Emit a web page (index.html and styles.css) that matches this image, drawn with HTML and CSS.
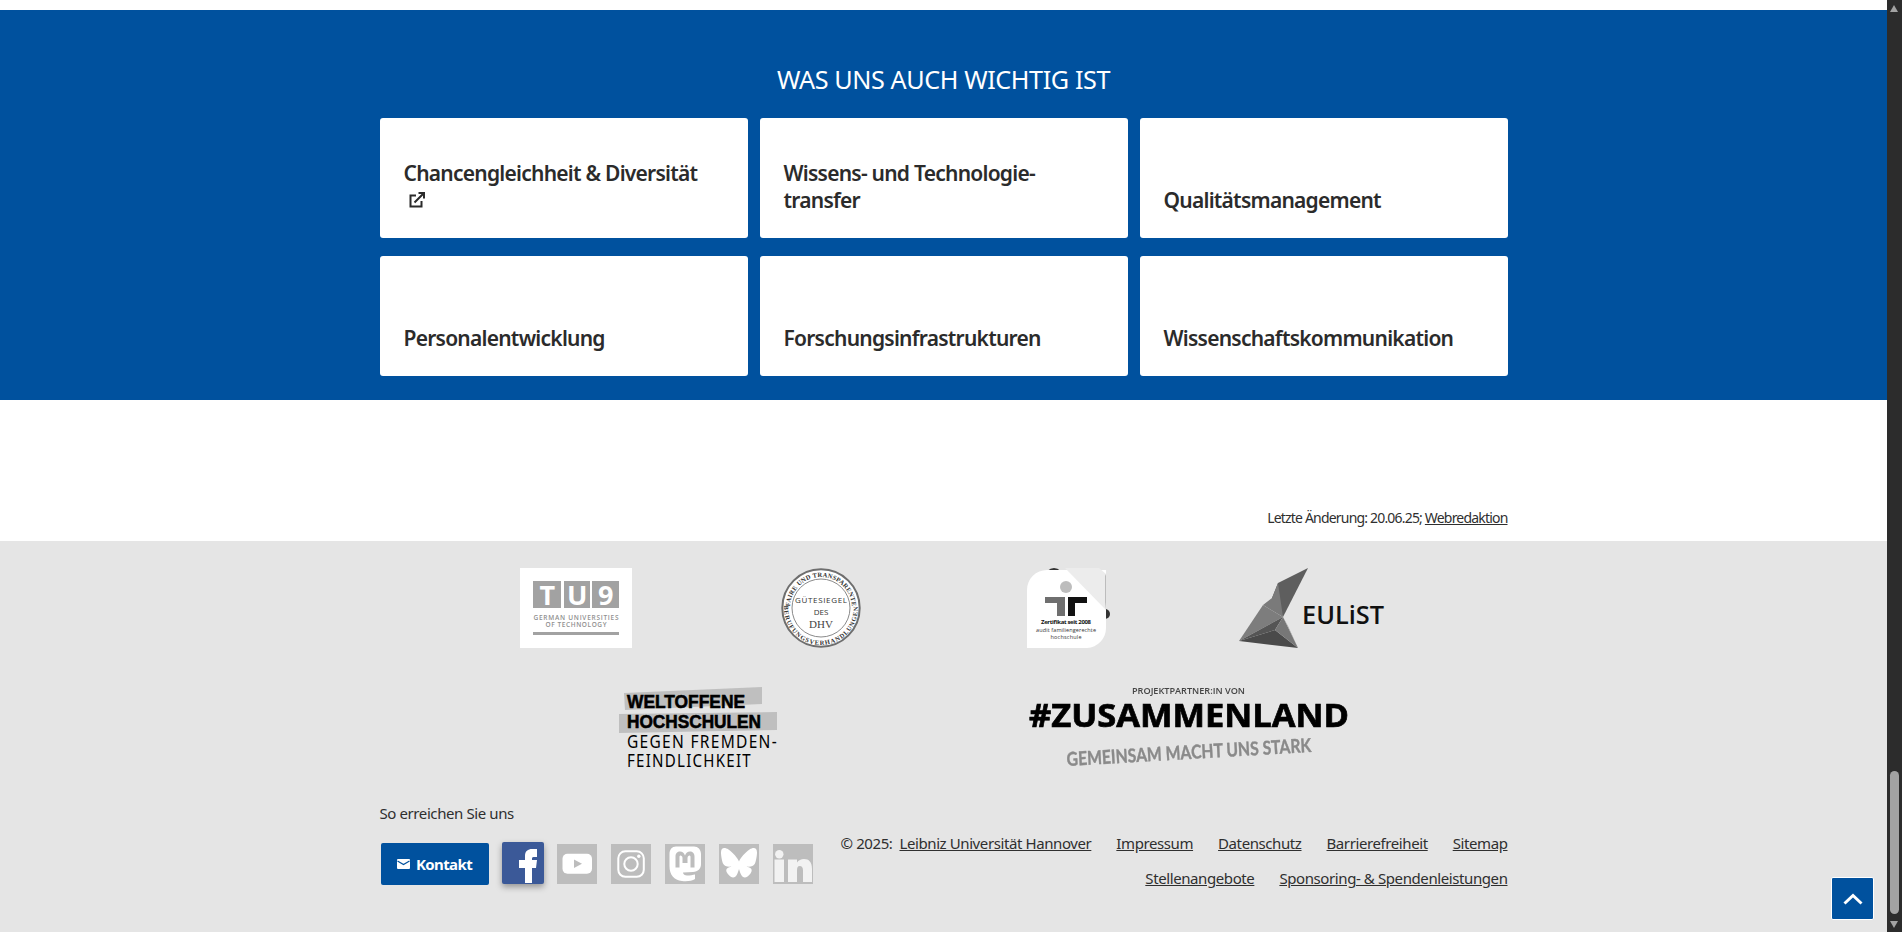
FILE: index.html
```html
<!DOCTYPE html>
<html lang="de">
<head>
    <meta charset="UTF-8">
    <title>Was uns auch wichtig ist</title>
    <link rel="stylesheet" href="styles.css">
</head>
<body>
<div class="page">
    <main class="content">
        <section class="topics">
            <h2>WAS UNS AUCH WICHTIG IST</h2>
            <div class="wrap topic-grid">
                <a class="topic" href="#"><span>Chancengleichheit &amp; Diversität
                    <svg class="ext" viewBox="0 0 16 16"><path d="M12.5 9v5.5h-11v-11H7" fill="none" stroke="#2b2b2b" stroke-width="2"/><path d="M5.5 10.5 14 2M9.5 1h5.5v5.5" fill="none" stroke="#2b2b2b" stroke-width="2"/></svg></span></a>
                <a class="topic" href="#"><span>Wissens- und Technologie-<br>transfer</span></a>
                <a class="topic" href="#"><span>Qualitätsmanagement</span></a>
                <a class="topic" href="#"><span>Personalentwicklung</span></a>
                <a class="topic" href="#"><span>Forschungsinfrastrukturen</span></a>
                <a class="topic" href="#"><span>Wissenschaftskommunikation</span></a>
            </div>
        </section>

        <div class="wrap changed">Letzte Änderung: 20.06.25; <a href="#">Webredaktion</a></div>

        <footer class="footer">
            <div class="logos">
                <div class="logo logo-quarter">
                    <svg width="112" height="80" viewBox="0 0 112 80">
                        <rect width="112" height="80" fill="#fff"/>
                        <rect x="13" y="13" width="28" height="27" fill="#a2a2a2"/>
                        <rect x="44" y="13" width="26" height="27" fill="#a2a2a2"/>
                        <rect x="72" y="13" width="27" height="27" fill="#a2a2a2"/>
                        <text class="tu-big" x="27" y="37" text-anchor="middle">T</text>
                        <text class="tu-big" x="57" y="37" text-anchor="middle">U</text>
                        <text class="tu-big" x="85.5" y="37" text-anchor="middle">9</text>
                        <text class="tu-small" x="56" y="51.5" text-anchor="middle" textLength="85">GERMAN UNIVERSITIES</text>
                        <text class="tu-small" x="56" y="58.5" text-anchor="middle" textLength="61">OF TECHNOLOGY</text>
                        <rect x="13" y="64" width="86" height="3" fill="#a2a2a2"/>
                    </svg>
                </div>
                <div class="logo logo-quarter">
                    <svg width="80" height="80" viewBox="0 0 80 80">
                        <defs>
                            <path id="sealTop" d="M9 40A31 31 0 0 1 71 40"/>
                            <path id="sealBottom" d="M3 40A37 37 0 0 0 77 40"/>
                        </defs>
                        <circle cx="40" cy="40" r="38.7" fill="#fff" stroke="#6e6e6e" stroke-width="2"/>
                        <circle cx="40" cy="40" r="29" fill="#fff" stroke="#8a8a8a"/>
                        <text class="seal-ring" text-anchor="middle"><textPath href="#sealTop" startOffset="50%">FAIRE UND TRANSPARENTE</textPath></text>
                        <text class="seal-ring seal-ring-low" text-anchor="middle"><textPath href="#sealBottom" startOffset="50%">BERUFUNGSVERHANDLUNGEN</textPath></text>
                        <text class="seal-mid" x="40" y="35" text-anchor="middle" textLength="52">GÜTESIEGEL</text>
                        <text class="seal-mid" x="40" y="47" text-anchor="middle">DES</text>
                        <text class="seal-dhv" x="40" y="60" text-anchor="middle">DHV</text>
                    </svg>
                </div>
                <div class="logo logo-quarter">
                    <svg class="nudge" width="80" height="80" viewBox="0 0 80 80">
                        <circle cx="27" cy="9" r="9" fill="#333"/>
                        <circle cx="78" cy="46" r="5" fill="#333"/>
                        <path d="M20 2H79V60A20 20 0 0 1 60 80H0V22A20 20 0 0 1 20 2Z" fill="#fff"/>
                        <path d="M38 0H72L79 6V42Z" fill="#ececec"/>
                        <path d="M79 6V42L78 34V8Z" fill="#bcbcbc"/>
                        <circle cx="39" cy="19" r="6" fill="#bdbdbd"/>
                        <path d="M18 29H38V48H30V35H18Z" fill="#6f6f6f"/>
                        <path d="M41 29H60V35H48V48H41Z" fill="#111"/>
                        <text class="fam-bold" x="39" y="56" text-anchor="middle" textLength="50">Zertifikat seit 2008</text>
                        <text class="fam" x="39" y="64" text-anchor="middle" textLength="60">audit familiengerechte</text>
                        <text class="fam" x="39" y="71" text-anchor="middle" textLength="31">hochschule</text>
                    </svg>
                </div>
                <div class="logo logo-quarter">
                    <svg class="nudge" width="146" height="80" viewBox="0 0 146 80">
                        <path d="M69 0 39 15 33 30 44 49Z" fill="#5e5e5e"/>
                        <path d="M39 15 33 30 24 37 44 49Z" fill="#7a7a7a"/>
                        <path d="M24 37 0 73 44 49Z" fill="#7d7d7d"/>
                        <path d="M44 49 0 73 36 62Z" fill="#555"/>
                        <path d="M0 73 59 80 36 62Z" fill="#4a4a4a"/>
                        <path d="M44 49 36 62 59 80Z" fill="#777"/>
                        <path d="M44 49 49 58 59 80 47 55Z" fill="#999"/>
                        <text class="eulist" x="63" y="56" textLength="82" lengthAdjust="spacingAndGlyphs">EULiST</text>
                    </svg>
                </div>
                <div class="logo logo-half">
                    <svg width="160" height="82" viewBox="0 0 160 82">
                        <path d="M5 6 143 0V17L6 23Z" fill="#bfbfbf"/>
                        <path d="M0 27 158 25V43L0 46Z" fill="#bfbfbf"/>
                        <text class="welt-bold" x="8" y="21" textLength="118" lengthAdjust="spacingAndGlyphs">WELTOFFENE</text>
                        <text class="welt-bold" x="8" y="41" textLength="134" lengthAdjust="spacingAndGlyphs">HOCHSCHULEN</text>
                        <text class="welt" x="8" y="61" textLength="151" lengthAdjust="spacingAndGlyphs">GEGEN FREMDEN-</text>
                        <text class="welt" x="8" y="80" textLength="125" lengthAdjust="spacingAndGlyphs">FEINDLICHKEIT</text>
                    </svg>
                </div>
                <div class="logo logo-half">
                    <svg class="soft" width="322" height="82" viewBox="0 0 322 82">
                        <text class="zus-top" x="104" y="7" textLength="113" lengthAdjust="spacingAndGlyphs">PROJEKTPARTNER:IN VON</text>
                        <text class="zus-main" x="1" y="40" textLength="320" lengthAdjust="spacingAndGlyphs">#ZUSAMMENLAND</text>
                        <text class="zus-sub" x="39" y="79" textLength="245" lengthAdjust="spacingAndGlyphs" transform="rotate(-3.3 39 79)">GEMEINSAM MACHT UNS STARK</text>
                    </svg>
                </div>
            </div>

            <div class="wrap foot-row">
                <div class="reach">
                    <p>So erreichen Sie uns</p>
                    <div class="reach-row">
                        <a class="contact" href="#">
                            <svg width="13" height="10" viewBox="0 0 13 10"><rect width="13" height="10" rx="1" fill="#fff"/><path d="M0.5 2 6.5 5.5 12.5 2" fill="none" stroke="#00519e" stroke-width="1.2"/></svg>
                            Kontakt</a>
                        <a class="social fb" href="#"><svg width="42" height="42" viewBox="0 0 42 42"><path d="M23 41V26H17V18H23V14C23 9 26 7 30 7H35V15H31.5C30 15 30 16 30 17V18H35L34 26H30V41Z" fill="#fff"/></svg></a>
                        <a class="social" href="#"><svg width="40" height="40" viewBox="0 0 40 40"><rect x="5.5" y="9.7" width="29.5" height="20" rx="5" fill="#fff"/><path d="M17 15.5 25 19.7 17 24Z" fill="#bdbdbd"/></svg></a>
                        <a class="social" href="#"><svg width="40" height="40" viewBox="0 0 40 40"><rect x="7.3" y="7.3" width="25.5" height="25.5" rx="7" fill="none" stroke="#fff" stroke-width="2"/><circle cx="20" cy="20" r="6.7" fill="none" stroke="#fff" stroke-width="2"/><circle cx="27.8" cy="12.2" r="1.7" fill="#fff"/></svg></a>
                        <a class="social" href="#"><svg width="40" height="40" viewBox="0 0 40 40"><path d="M11 2.5H29C33 2.5 36 5.5 36 10V20C36 25 33 27.5 28 28L18 28.5C18 30.5 20 31.5 22 31.5 25 31.5 28 31 30 30.5V35C27 37 22 37.5 17 37 9 36 4.5 31 4.5 22V10C4.5 5.5 7 2.5 11 2.5Z" fill="#fff"/><path d="M10.5 23.5V12.5C10.5 9 12.5 7.5 15 7.5 17.5 7.5 19 9 20 11.5 21 9 22.5 7.5 25 7.5 27.5 7.5 29.5 9 29.5 12.5V23.5H25.5V13C25.5 12 25 11.5 24.5 11.5 23.5 11.5 22.5 12.5 22.5 14V19H17.5V14C17.5 12.5 16.5 11.5 15.5 11.5 15 11.5 14.5 12 14.5 13V23.5Z" fill="#bdbdbd"/></svg></a>
                        <a class="social" href="#"><svg width="40" height="40" viewBox="0 0 40 40"><path d="M20 17.5C18.5 14 14 8.5 9.5 5.5 5.5 3 2 3.5 2 8.5 2 11.5 3 17 4 19.5 5.5 22.5 9 23 12.5 22.5 8.5 23.5 5.5 25 8.5 29.5 12.5 35 16 34.5 18 30.5 19 28.5 19.5 26.5 20 25 20.5 26.5 21 28.5 22 30.5 24 34.5 27.5 35 31.5 29.5 34.5 25 31.5 23.5 27.5 22.5 31 23 34.5 22.5 36 19.5 37 17 38 11.5 38 8.5 38 3.5 34.5 3 30.5 5.5 26 8.5 21.5 14 20 17.5Z" fill="#fff"/></svg></a>
                        <a class="social" href="#"><svg width="40" height="40" viewBox="0 0 40 40"><circle cx="6.3" cy="10.3" r="4.2" fill="#f2f2f2"/><rect x="1.5" y="15.5" width="9.5" height="22.5" fill="#f2f2f2"/><path d="M15 15.5H24V18.5C25.5 16.3 28 15 31 15 36 15 39 18 39 25V38H30V26.5C30 23.5 29 22 26.8 22 24.5 22 24 24 24 26.5V38H15Z" fill="#f2f2f2"/></svg></a>
                    </div>
                </div>
                <div class="legal">
                    <div class="legal-line"><span>© 2025:&nbsp; <a href="#">Leibniz Universität Hannover</a></span><a href="#">Impressum</a><a href="#">Datenschutz</a><a href="#">Barrierefreiheit</a><a href="#">Sitemap</a></div>
                    <div class="legal-line"><a href="#">Stellenangebote</a><a href="#">Sponsoring- &amp; Spendenleistungen</a></div>
                </div>
            </div>
        </footer>
    </main>

    <aside class="scrollbar">
        <span class="arrow-up"></span>
        <span class="thumb"></span>
        <span class="arrow-down"></span>
    </aside>

    <a class="to-top" href="#"><svg width="20" height="12" viewBox="0 0 20 12"><path d="M1.5 10.5 10 2.5 18.5 10.5" fill="none" stroke="#fff" stroke-width="3"/></svg></a>
</div>
</body>
</html>
```

FILE: styles.css
```css
html,
body {
    margin: 0;
    padding: 0;
    height: 932px;
    overflow: hidden;
}

body {
    font-family: 'Noto Sans', 'Open Sans', sans-serif;
    font-size: 15px;
    letter-spacing: -0.027em;
    color: #2f2f2f;
    background-color: #fff;
}

a {
    color: inherit;
}

.page {
    display: flex;
    height: 932px;
}

.content {
    flex: 1;
    min-width: 0;
    padding-top: 10px;
}

.wrap {
    width: 1128px;
    margin: 0 auto;
}

.topics {
    background-color: #00519e;
    height: 390px;
    box-sizing: border-box;
    padding-top: 51px;
}

.topics h2 {
    margin: 0 0 21px;
    font-size: 25.2px;
    line-height: 36px;
    font-weight: 400;
    text-align: center;
    color: #fff;
}

.topic-grid {
    display: grid;
    grid-template-columns: repeat(3, 368px);
    grid-auto-rows: 120px;
    gap: 18px 12px;
}

.topic {
    display: flex;
    flex-direction: column;
    justify-content: flex-end;
    box-sizing: border-box;
    padding: 0 24px 24px;
    background-color: #fff;
    border-radius: 3px;
    font-size: 21px;
    line-height: 27px;
    font-weight: 600;
    letter-spacing: -0.036em;
    color: #2b2b2b;
    text-decoration: none;
}

.ext {
    display: block;
    width: 16px;
    height: 16px;
    margin: 5px 0 6px 5px;
}

.changed {
    box-sizing: border-box;
    height: 141px;
    padding-top: 108px;
    line-height: 20px;
    font-size: 14px;
    letter-spacing: -0.058em;
    text-align: right;
}

.footer {
    height: 391px;
    box-sizing: border-box;
    padding-top: 27px;
    background-color: #e5e5e5;
}

.logos {
    display: flex;
    flex-wrap: wrap;
    row-gap: 39px;
    width: 980px;
    margin: 0 auto;
}

.logo {
    display: flex;
    justify-content: center;
    height: 80px;
}

.logo svg {
    display: block;
    flex: none;
    overflow: visible;
}

.logo .nudge {
    margin-left: 1px;
}

.logo-quarter {
    width: 25%;
}

.logo-half {
    width: 50%;
}

.tu-big {
    font: 700 27px 'Open Sans', sans-serif;
    fill: #fff;
}

.tu-small {
    font: 600 6.5px 'Open Sans', sans-serif;
    fill: #8f8f8f;
    letter-spacing: 0;
}

.seal-ring {
    font: 700 6.5px 'Liberation Serif', serif;
    fill: #333;
    letter-spacing: 0.2px;
}

.seal-ring-low {
    letter-spacing: 0.9px;
}

.seal-mid {
    font: 8px 'Open Sans', sans-serif;
    fill: #333;
    letter-spacing: 0;
}

.seal-dhv {
    font: 11px 'Liberation Serif', serif;
    fill: #444;
    letter-spacing: 0;
}

.fam-bold {
    font: 700 6px 'Open Sans', sans-serif;
    fill: #111;
    letter-spacing: 0;
}

.fam {
    font: 5.5px 'Open Sans', sans-serif;
    fill: #333;
    letter-spacing: 0;
}

.eulist {
    font: 600 25px 'Open Sans', sans-serif;
    fill: #111;
    letter-spacing: 0;
}

.welt-bold {
    font: 700 19px 'Liberation Sans', sans-serif;
    fill: #000;
    stroke: #000;
    stroke-width: 0.6;
    letter-spacing: 0;
}

.welt {
    font: 400 18px 'Noto Sans', sans-serif;
    fill: #000;
    letter-spacing: 1.5px;
}

.soft {
    filter: blur(0.5px);
}

.zus-top {
    font: 600 8px 'Open Sans', sans-serif;
    fill: #444;
    letter-spacing: 0;
}

.zus-main {
    font: 700 33px 'Open Sans', sans-serif;
    fill: #000;
    stroke: #000;
    stroke-width: 0.7;
    letter-spacing: 0;
}

.zus-sub {
    font: 700 19px 'Lato', sans-serif;
    fill: #8a8a8a;
    stroke: #8a8a8a;
    stroke-width: 0.4;
    letter-spacing: 0;
}

.foot-row {
    display: flex;
    justify-content: space-between;
    align-items: flex-start;
    margin-top: 35px;
}

.reach p {
    margin: 0 0 19px;
    line-height: 22px;
}

.reach-row {
    display: flex;
    align-items: center;
    gap: 14px;
    padding-left: 1px;
}

.contact {
    display: flex;
    align-items: center;
    justify-content: center;
    gap: 6px;
    width: 108px;
    height: 42px;
    border-radius: 2px;
    background-color: #00519e;
    color: #fff;
    font-weight: 700;
    letter-spacing: -0.04em;
    text-decoration: none;
}

.social {
    display: block;
    flex: none;
    width: 40px;
    height: 40px;
    background-color: #bdbdbd;
}

.social svg {
    display: block;
}

.fb {
    width: 42px;
    height: 42px;
    margin: -2px -1px 0 -1px;
    border-radius: 2px;
    background-color: #3b5998;
    box-shadow: 0 3px 6px rgba(0, 0, 0, 0.35);
}

.legal {
    margin-top: 24px;
}

.legal-line {
    display: flex;
    justify-content: flex-end;
    gap: 25px;
    line-height: 35px;
}

.to-top {
    position: absolute;
    left: 1831px;
    top: 877px;
    display: flex;
    align-items: center;
    justify-content: center;
    box-sizing: border-box;
    width: 43px;
    height: 43px;
    border: 1px solid #fff;
    border-radius: 2px;
    background-color: #00519e;
}

.scrollbar {
    position: relative;
    flex: none;
    width: 15px;
    background-color: #2c2c2c;
}

.arrow-up,
.arrow-down {
    position: absolute;
    left: 3px;
    width: 0;
    height: 0;
    border-left: 4.5px solid transparent;
    border-right: 4.5px solid transparent;
}

.arrow-up {
    top: 5px;
    border-bottom: 7px solid #a3a3a3;
}

.arrow-down {
    top: 921px;
    border-top: 7px solid #a3a3a3;
}

.thumb {
    position: absolute;
    left: 3px;
    top: 771px;
    width: 9px;
    height: 143px;
    border-radius: 5px;
    background-color: #a3a3a3;
}
```
